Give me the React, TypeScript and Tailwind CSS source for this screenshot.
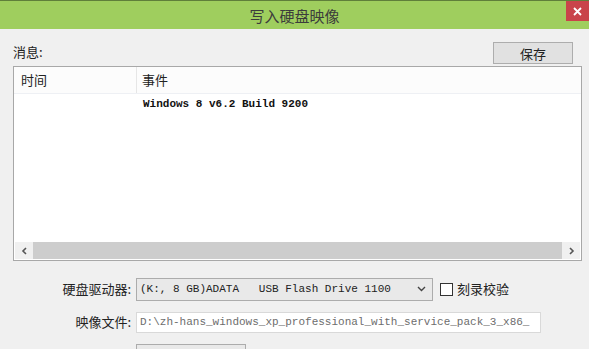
import React from "react";

const cjk = { fontFamily: '"Noto Sans CJK SC", "Noto Sans", sans-serif' };
const mono = { fontFamily: '"Liberation Mono", "DejaVu Sans Mono", monospace' };

export default function App() {
  return (
    <div className="w-[589px] h-[349px] overflow-hidden bg-[#f0f0f0] flex flex-col text-[#222]" style={cjk}>
      {/* title bar */}
      <div className="relative h-[29px] shrink-0 bg-[#9fce5e] border-t border-[#5f7f3a] flex items-center justify-center">
        <span className="text-[15px] text-[#3c3c3c] leading-none">写入硬盘映像</span>
        <div className="absolute right-0 top-0 w-[23px] h-[20px] bg-[#c9444a] flex items-center justify-center">
          <svg width="9" height="9" viewBox="0 0 9 9">
            <path d="M1 1 L8 8 M8 1 L1 8" stroke="#fff" strokeWidth="1.8" />
          </svg>
        </div>
      </div>

      <div className="flex-1 flex flex-col pl-[13px] pr-[7px]">
        {/* message header */}
        <div className="h-[37px] flex items-end justify-between">
          <span className="text-[13px] leading-none mb-[8px]">消息:</span>
          <button className="w-[80px] h-[22px] mr-[9px] mb-[2px] border border-[#adadad] bg-[#e1e1e1] text-[13px] leading-none flex items-center justify-center">
            保存
          </button>
        </div>

        {/* list box */}
        <div className="h-[195px] border border-[#a8a8a8] bg-white flex flex-col">
          <div className="h-[27px] flex bg-[#fcfcfc] border-b border-[#eef0f4] text-[13px]">
            <div className="w-[123px] border-r border-[#e6e6e6] flex items-center pl-[7px]">时间</div>
            <div className="flex items-center pl-[5px]">事件</div>
          </div>
          <div className="h-[20px] flex items-center pl-[129px] text-[11px] font-bold text-[#111]" style={mono}>
            Windows 8 v6.2 Build 9200
          </div>
          <div className="flex-1" />
          <div className="h-[17px] flex bg-[#f0f0f0] mb-[1px] mx-[1px]">
            <div className="w-[18px] flex items-center justify-center">
              <svg width="7" height="8" viewBox="0 0 7 8">
                <path d="M5 1 L2 4 L5 7" stroke="#555" strokeWidth="1.6" fill="none" />
              </svg>
            </div>
            <div className="flex-1 bg-[#cdcdcd]" />
            <div className="w-[18px] flex items-center justify-center">
              <svg width="7" height="8" viewBox="0 0 7 8">
                <path d="M2 1 L5 4 L2 7" stroke="#555" strokeWidth="1.6" fill="none" />
              </svg>
            </div>
          </div>
        </div>

        {/* form */}
        <div className="mt-[16px] flex items-center h-[24px]">
          <span className="w-[121px] text-right text-[13px] pr-[3px]">硬盘驱动器:</span>
          <div className="ml-[2px] w-[297px] h-[23px] border border-[#acacac] bg-[#e9e9e9] flex items-center justify-between pl-[3px] pr-[6px]">
            <span className="text-[11px] text-[#222] whitespace-pre" style={mono}>(K:, 8 GB)ADATA   USB Flash Drive 1100</span>
            <svg width="9" height="6" viewBox="0 0 9 6">
              <path d="M1 1 L4.5 4.5 L8 1" stroke="#444" strokeWidth="1.4" fill="none" />
            </svg>
          </div>
          <div className="ml-[7px] w-[13px] h-[13px] border border-[#333] bg-white" />
          <span className="ml-[4px] text-[13px]">刻录校验</span>
        </div>

        <div className="mt-[10px] flex items-center h-[22px]">
          <span className="w-[121px] text-right text-[13px] pr-[3px]">映像文件:</span>
          <div className="ml-[2px] w-[405px] h-[21px] border border-[#d9d9d9] bg-white flex items-center pl-[3px]">
            <span className="text-[11px] text-[#6d6d6d] whitespace-pre" style={mono}>D:\zh-hans_windows_xp_professional_with_service_pack_3_x86_</span>
          </div>
        </div>

        <div className="mt-[11px] flex items-start h-[22px]">
          <span className="w-[121px]" />
          <div className="ml-[2px] w-[110px] h-[22px] border border-[#acacac] bg-[#e9e9e9]" />
        </div>
      </div>
    </div>
  );
}
